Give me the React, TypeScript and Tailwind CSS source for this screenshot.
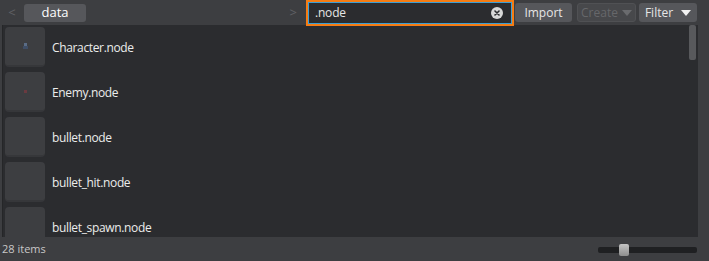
import React from "react";

const items = [
  { name: "Character.node", icon: "char" },
  { name: "Enemy.node", icon: "enemy" },
  { name: "bullet.node", icon: "" },
  { name: "bullet_hit.node", icon: "" },
  { name: "bullet_spawn.node", icon: "" },
];

function Triangle({ color }: { color: string }) {
  return (
    <svg width="10" height="6" viewBox="0 0 10 6">
      <path d="M0 0 L10 0 L5 6 Z" fill={color} />
    </svg>
  );
}

export default function App() {
  return (
    <div
      className="w-[709px] h-[261px] bg-[#3d3e41] flex flex-col overflow-hidden text-[#e6e6e6]"
      style={{ fontFamily: '"Open Sans", "Noto Sans", sans-serif' }}
    >
      {/* top bar */}
      <div className="h-[25px] flex items-center shrink-0 relative z-10">
        <div className="w-[24px] h-full flex items-center justify-center text-[#606165] text-[13px]">&lt;</div>
        <div className="w-[62px] h-[18px] rounded-[3px] bg-[#56575b] flex items-center justify-center text-[13px] text-white">
          data
        </div>
        <div className="flex-1 h-full flex items-center justify-end pr-[9px] text-[#606165] text-[13px]">&gt;</div>
        <div className="w-[208px] h-[26px] border-2 border-[#f57c14] self-start">
          <div className="w-full h-full border border-[#3c9fd6] bg-[#2b2c2f] flex items-center pl-[6px] pr-[8px]">
            <span className="text-[12px] text-[#e6e6e6] flex-1 tracking-[-0.2px]">.node</span>
            <div className="w-[12px] h-[12px] rounded-full bg-[#d8d8d8] flex items-center justify-center">
              <svg width="6" height="6" viewBox="0 0 6 6">
                <path d="M1 1 L5 5 M5 1 L1 5" stroke="#2b2c2f" strokeWidth="1.6" strokeLinecap="round" />
              </svg>
            </div>
          </div>
        </div>
        <div className="w-[57px] h-[19px] ml-[1px] rounded-[3px] bg-[#56575b] flex items-center justify-center text-[12px] text-[#e6e6e6]">
          Import
        </div>
        <div className="w-[59px] h-[19px] ml-[5px] rounded-[3px] bg-[#47484b] border border-[#505154] flex items-center justify-center gap-[4px] text-[12px] text-[#66676a]">
          <span>Create</span>
          <Triangle color="#6a6b6e" />
        </div>
        <div className="w-[58px] h-[19px] ml-[3px] rounded-[3px] bg-[#56575b] flex items-center justify-center gap-[8px] text-[12px] text-[#e6e6e6]">
          <span>Filter</span>
          <Triangle color="#f2f2f2" />
        </div>
        <div className="w-[12px]" />
      </div>

      {/* list */}
      <div className="flex-1 flex min-h-0 pl-[2px] pr-[11px]">
        <div className="flex-1 bg-[#2b2c2f] border-l border-[#252628] flex min-h-0 overflow-hidden">
          <div className="flex-1 flex flex-col gap-[5px] pt-[2px] pl-[2px] overflow-hidden">
            {items.map((it) => (
              <div key={it.name} className="flex items-center shrink-0 h-[40px]">
                <div className="w-[40px] h-[40px] rounded-[4px] bg-[#3d3e41] border-b-2 border-[#36373a] flex items-center justify-center shrink-0">
                  {it.icon === "char" && (
                    <svg width="5" height="7" viewBox="0 0 5 7">
                      <rect x="1" y="0" width="3" height="3" fill="#5a6c86" />
                      <rect x="0" y="3" width="5" height="3" fill="#3f4e66" />
                    </svg>
                  )}
                  {it.icon === "enemy" && (
                    <svg width="3" height="3" viewBox="0 0 3 3">
                      <rect x="0" y="0" width="3" height="3" fill="#6a3a40" />
                    </svg>
                  )}
                </div>
                <span className="ml-[7px] mt-[2px] text-[12px] tracking-[-0.35px] text-[#ececec]">{it.name}</span>
              </div>
            ))}
          </div>
          <div className="w-[9px] pr-[1px] flex flex-col">
            <div className="w-[7px] h-[35px] rounded-[2px] bg-[#58595c]" />
          </div>
        </div>
      </div>

      {/* bottom bar */}
      <div className="h-[24px] flex items-center shrink-0 pl-[2px] pr-[12px]">
        <span className="text-[11px] text-[#c8c8c8] flex-1">28 items</span>
        <div className="relative w-[99px] h-[6px] rounded-[2px] bg-[#1f2022] mt-[1px]">
          <div className="absolute left-[21px] -top-[3px] w-[10px] h-[12px] rounded-[2px] bg-gradient-to-b from-[#c4c4c4] to-[#8e8e8e]" />
        </div>
      </div>
    </div>
  );
}
